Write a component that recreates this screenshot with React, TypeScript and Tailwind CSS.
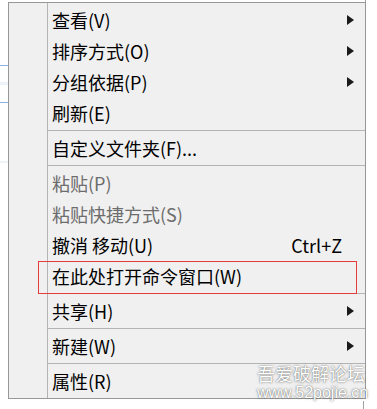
import React from "react";

type Item = {
  label: string;
  sub?: boolean;
  disabled?: boolean;
  shortcut?: string;
  marked?: boolean;
};

const groups: Item[][] = [
  [
    { label: "查看(V)", sub: true },
    { label: "排序方式(O)", sub: true },
    { label: "分组依据(P)", sub: true },
    { label: "刷新(E)" },
  ],
  [{ label: "自定义文件夹(F)..." }],
  [
    { label: "粘贴(P)", disabled: true },
    { label: "粘贴快捷方式(S)", disabled: true },
    { label: "撤消 移动(U)", shortcut: "Ctrl+Z" },
    { label: "在此处打开命令窗口(W)", marked: true },
  ],
  [{ label: "共享(H)", sub: true }],
  [{ label: "新建(W)", sub: true }],
  [{ label: "属性(R)" }],
];

function Arrow() {
  return (
    <svg width="7" height="10" viewBox="0 0 7 10" className="absolute right-[11px] top-1/2 -translate-y-1/2">
      <polygon points="0,0 7,5 0,10" fill="#1a1a1a" />
    </svg>
  );
}

function Row({ item }: { item: Item }) {
  return (
    <div
      className={`relative h-[31px] flex items-center pl-[4px] ${
        item.disabled ? "text-[#6d6d6d]" : "text-black"
      }`}
    >
      <span className="leading-none">{item.label}</span>
      {item.shortcut && (
        <span className="absolute right-[23px] leading-none">{item.shortcut}</span>
      )}
      {item.sub && <Arrow />}
      {item.marked && (
        <div className="absolute left-[-10px] right-[8px] top-[1px] bottom-[-3px] border border-[#e53b3b]" />
      )}
    </div>
  );
}

export default function App() {
  return (
    <div className="relative w-[377px] h-[409px] bg-white overflow-hidden font-['Noto_Sans_CJK_SC',sans-serif] text-[18px]">
      <div className="h-[2px] flex">
        <div className="ml-[365px] w-px bg-[#a0a0a0]" />
      </div>
      <div className="flex">
        <div className="w-[8px] flex flex-col">
          <div className="h-[63px]" />
          <div className="h-px bg-[#8fb4e3]" />
          <div className="h-[16px]" />
          <div className="h-[3px] bg-[#eef3fa]" />
          <div className="h-[17px]" />
          <div className="h-px bg-[#8fb4e3]" />
          <div className="h-[58px]" />
          <div className="h-[2px] bg-[#eef3fa]" />
        </div>
        <div className="w-[358px] h-[397px] border border-[#979797] bg-[#f0f0f0] flex">
          <div className="w-[38px]" />
          <div className="w-px bg-[#b4b4b4]" />
          <div className="flex-1 flex flex-col pt-px pb-[2px]">
            {groups.map((g, gi) => (
              <React.Fragment key={gi}>
                {gi > 0 && (
                  <div className="h-[4px] flex flex-col justify-center">
                    <div className="h-px bg-[#b4b4b4]" />
                  </div>
                )}
                {g.map((item) => (
                  <Row key={item.label} item={item} />
                ))}
              </React.Fragment>
            ))}
          </div>
        </div>
      </div>
      <div className="flex h-[10px]">
        <div className="ml-[363px] mt-[2px] w-px bg-[#a0a0a0]" />
      </div>
      <div className="absolute left-[257px] top-[363px] flex flex-col items-start gap-[3px] text-white [text-shadow:0_0_1px_rgba(0,0,0,0.55),0_0_3px_rgba(0,0,0,0.35)] pointer-events-none">
        <span className="text-[18px] leading-[20px]">吾爱破解论坛</span>
        <span className="text-[16px] leading-[14px] font-['Liberation_Sans',sans-serif]">www.52pojie.cn</span>
      </div>
    </div>
  );
}
